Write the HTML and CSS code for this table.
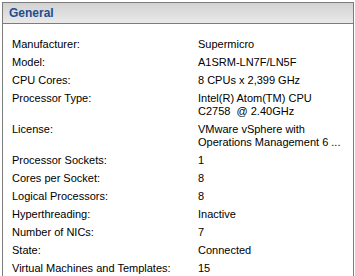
FILE: index.html
```html
<!DOCTYPE html>
<html lang="en">
<head>
    <meta charset="UTF-8">
    <title>General</title>
    <link rel="stylesheet" href="styles.css">
</head>
<body>
    <div class="panel">
        <div class="panel-header">General</div>
        <div class="panel-body">
            <div class="label">Manufacturer:</div>
            <div class="value">Supermicro</div>

            <div class="label">Model:</div>
            <div class="value">A1SRM-LN7F/LN5F</div>

            <div class="label">CPU Cores:</div>
            <div class="value">8 CPUs x 2,399 GHz</div>

            <div class="label">Processor Type:</div>
            <div class="value">Intel(R) Atom(TM) CPU<br>C2758&nbsp; @ 2.40GHz</div>

            <div class="label">License:</div>
            <div class="value">VMware vSphere with<br>Operations Management 6 ...</div>

            <div class="label">Processor Sockets:</div>
            <div class="value">1</div>

            <div class="label">Cores per Socket:</div>
            <div class="value">8</div>

            <div class="label">Logical Processors:</div>
            <div class="value">8</div>

            <div class="label">Hyperthreading:</div>
            <div class="value">Inactive</div>

            <div class="label">Number of NICs:</div>
            <div class="value">7</div>

            <div class="label">State:</div>
            <div class="value">Connected</div>

            <div class="label">Virtual Machines and Templates:</div>
            <div class="value">15</div>
        </div>
    </div>
</body>
</html>
```

FILE: styles.css
```css
body {
    margin: 0;
    padding: 2px 1px 0 2px;
    background: #fff;
    font-family: "Liberation Sans", Arial, sans-serif;
    font-size: 11px;
    color: #000;
}
.panel {
    border: 1px solid #7c7c7c;
    border-bottom: none;
    height: 274px;
    box-sizing: border-box;
}
.panel-header {
    height: 20px;
    line-height: 20px;
    padding-left: 6px;
    background: linear-gradient(to bottom, #d2d2d2, #e9e9e9);
    border-bottom: 1px solid #7c7c7c;
    color: #1d4f8f;
    font-weight: bold;
    font-size: 12px;
}
.panel-body {
    display: grid;
    grid-template-columns: 186px 1fr;
    row-gap: 5px;
    padding: 14px 0 0 9px;
    line-height: 13px;
}
```
